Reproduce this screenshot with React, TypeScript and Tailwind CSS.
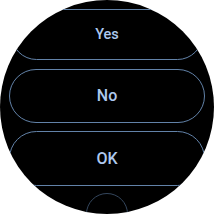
import React from 'react';

const font = { fontFamily: 'Roboto, "Noto Sans", sans-serif' };

export default function App() {
  return (
    <div className="w-[214px] h-[214px] bg-white" style={font}>
      <div className="w-[214px] h-[214px] rounded-full bg-black overflow-hidden flex flex-col items-center pt-[9px]">
        {/* Yes (scaled down at the top edge) */}
        <button className="shrink-0 w-[192px] h-[51px] rounded-full border border-[#6282a8] flex items-center justify-center text-[14.5px] font-medium text-[#adc8ee]">
          Yes
        </button>
        <button className="shrink-0 mt-[9px] w-[196px] h-[54px] rounded-full border border-[#6282a8] flex items-center justify-center text-[16px] font-medium text-[#adc8ee]">
          No
        </button>
        <button className="shrink-0 mt-[8px] w-[196px] h-[55px] rounded-full border border-[#6282a8] flex items-center justify-center text-[16px] font-medium text-[#adc8ee]">
          OK
        </button>
        <div className="shrink-0 mt-[7px] w-[42px] h-[42px] rounded-full border border-[#34465c]" />
      </div>
    </div>
  );
}
